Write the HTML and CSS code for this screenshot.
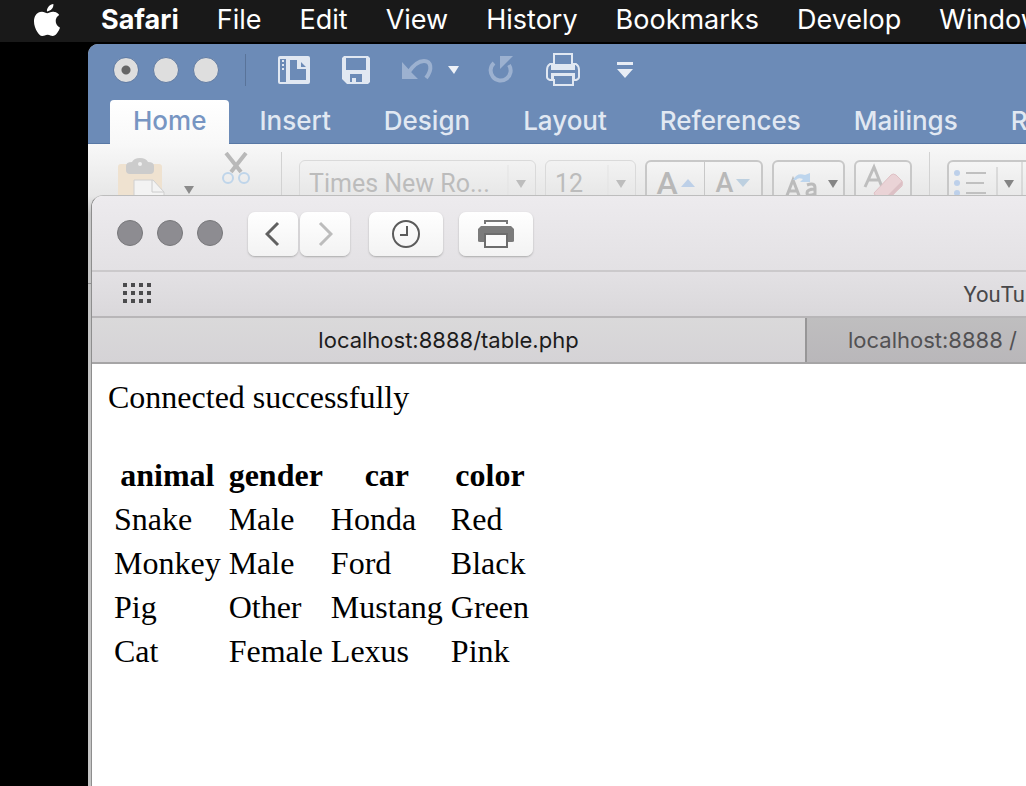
FILE: index.html
```html
<!DOCTYPE html>
<html lang="en">
<head>
<meta charset="utf-8">
<title>localhost:8888/table.php</title>
<link rel="stylesheet" href="styles.css">
</head>
<body class="desktop">
<nav class="menubar" aria-label="Menu bar">
  <button class="menu" aria-label="Apple"><svg width="32" height="32" viewBox="0 0 24 24" fill="#fff"><path d="M12.152 6.896c-.948 0-2.415-1.078-3.96-1.04-2.04.027-3.91 1.183-4.961 3.014-2.117 3.675-.546 9.103 1.519 12.09 1.013 1.454 2.208 3.09 3.792 3.039 1.52-.065 2.09-.987 3.935-.987 1.831 0 2.35.987 3.96.948 1.637-.026 2.676-1.48 3.676-2.948 1.156-1.688 1.636-3.325 1.662-3.415-.039-.013-3.182-1.221-3.22-4.857-.026-3.04 2.48-4.494 2.597-4.559-1.429-2.09-3.623-2.324-4.39-2.376-2-.156-3.675 1.09-4.61 1.09zM15.53 3.83c.843-1.012 1.4-2.427 1.245-3.83-1.207.052-2.662.805-3.532 1.818-.78.896-1.454 2.338-1.273 3.714 1.338.104 2.715-.688 3.559-1.701"/></svg></button>
  <button class="menu menu-app">Safari</button>
  <button class="menu">File</button>
  <button class="menu">Edit</button>
  <button class="menu">View</button>
  <button class="menu">History</button>
  <button class="menu">Bookmarks</button>
  <button class="menu">Develop</button>
  <button class="menu">Window</button>
</nav>

<section class="word" aria-label="Word window">
  <header class="word-title">
    <div class="lights">
      <button class="light light-edited" aria-label="Close"></button>
      <button class="light" aria-label="Minimize"></button>
      <button class="light" aria-label="Zoom"></button>
    </div>
    <div class="quick">
      <button class="tool" aria-label="Layout view"><svg width="32" height="28" viewBox="0 0 32 28"><rect width="32" height="28" rx="2" fill="#e1e8f2"/><path d="M2 3h6v23H2zM12 4h9l7 7v13H12z" fill="#6c8bb7"/><path d="M19 4v9h9v-2h-5V4z" fill="#e1e8f2"/><path d="M4 4h2v2H4zM4 8h2v2H4zM4 12h2v2H4z" fill="#e1e8f2"/></svg></button>
      <button class="tool" aria-label="Save"><svg width="28" height="28" viewBox="0 0 28 28"><path d="M2 0h24l2 2v24l-2 2H5l-5-5V2z" fill="#e1e8f2"/><path d="M4 2h20v12H4zM8 18h12v8h-6v-4h-4v4H8z" fill="#6c8bb7"/></svg></button>
      <button class="tool tool-undo" aria-label="Undo"><svg width="58" height="22" viewBox="0 0 58 22"><path d="M0 3v17h16l-6-6z" fill="#9cb1d0"/><path d="M6 14C12 5 17 2 22 2c7 0 9 8 2 17" fill="none" stroke="#9cb1d0" stroke-width="4"/><path d="M46 7h11l-5 8z" fill="#eef2f8"/></svg></button>
      <button class="tool" aria-label="Redo"><svg width="26" height="28" viewBox="0 0 26 28"><path d="M6 7a10 10 0 1 0 15 2" fill="none" stroke="#9cb1d0" stroke-width="4"/><path d="M12 0h13L12 13z" fill="#9cb1d0"/></svg></button>
      <button class="tool" aria-label="Print"><svg width="34" height="34" viewBox="0 0 34 34"><path d="M8 1h18v10h4q3 2 3 6v7q0 2-3 3h-3v5H8v-5H4q-3-1-3-3v-7q0-4 3-6h4z" fill="#6c8bb7" stroke="#e1e8f2" stroke-width="2"/><path d="M5 11h24v6H5zM6 20h23v3H6zM5 20h3v8H5zM26 20h3v8h-3z" fill="#e1e8f2"/></svg></button>
      <button class="tool tool-more" aria-label="Customize toolbar"><svg width="18" height="16" viewBox="0 0 18 16"><path d="M1 0h16v3H1zM1 7h16l-8 9z" fill="#e8edf5"/></svg></button>
    </div>
  </header>
  <nav class="word-tabs" aria-label="Ribbon tabs">
    <button class="word-tab word-tab-active">Home</button>
    <button class="word-tab">Insert</button>
    <button class="word-tab">Design</button>
    <button class="word-tab">Layout</button>
    <button class="word-tab">References</button>
    <button class="word-tab">Mailings</button>
    <button class="word-tab">Review</button>
  </nav>
  <div class="ribbon">
    <div class="clipboard">
      <button class="tool paste" aria-label="Paste"><svg width="78" height="44" viewBox="0 0 78 44"><rect y="6" width="44" height="42" rx="3" fill="#efe2d0"/><path d="M8 8q0-4 6-4 2-4 8-4t8 4q6 0 6 4v4q0 4-4 4H12q-4 0-4-4z" fill="#ccc"/><circle cx="22" cy="6" r="2" fill="#f1f1f1"/><path d="M16 48V22h19l11 12v14z" fill="#f3f3f3" stroke="#d0d0d0"/><path d="M34 22v12h12" fill="none" stroke="#ccc"/><path d="M66 28h10l-5 8z" fill="#8b8b8b"/></svg></button>
      <button class="tool" aria-label="Cut"><svg width="30" height="34" viewBox="0 0 30 34"><path d="M5 1L20 20M25 1L10 20" stroke="#b9b9b9" stroke-width="4"/><g fill="none" stroke="#bfd5ea" stroke-width="2"><circle cx="7" cy="26" r="5"/><circle cx="23" cy="26" r="5"/></g></svg></button>
    </div>
    <div class="fonts">
      <div class="combo combo-font">
        <select class="combo-select" aria-label="Font"><option>Times New Ro...</option></select>
        <svg class="combo-caret" width="28" height="38" viewBox="0 0 28 38"><path d="M1 0v38" stroke="#e3e3e3"/><path d="M9 15h10l-5 8z" fill="#bdbdbd"/></svg>
      </div>
      <div class="combo combo-size">
        <select class="combo-select" aria-label="Font size"><option>12</option></select>
        <svg class="combo-caret" width="28" height="38" viewBox="0 0 28 38"><path d="M1 0v38" stroke="#e3e3e3"/><path d="M9 15h10l-5 8z" fill="#bdbdbd"/></svg>
      </div>
      <div class="group">
        <button class="cell cell-wide" aria-label="Increase font size"><span class="letter">A</span><svg width="14" height="8" viewBox="0 0 14 8"><path d="M0 8l7-8 7 8z" fill="#bdd0e8"/></svg></button>
        <button class="cell cell-wide" aria-label="Decrease font size"><span class="letter letter-small">A</span><svg width="14" height="8" viewBox="0 0 14 8"><path d="M0 0h14L7 8z" fill="#bdd0e0"/></svg></button>
      </div>
      <button class="group change-case" aria-label="Change case"><svg width="69" height="42" viewBox="0 0 69 42"><g fill="none" stroke="#bbb" stroke-width="3"><path d="M12 36l7-18 7 18M14 29h10"/><path d="M33 23q8-3 8 3v8M41 27q-8 0-8 4t8 1"/></g><path d="M19 18q4-8 12-5l5-2v9H26l3-3q-5-2-7 1z" fill="#bdd5ed"/><path d="M54 18h10l-5 8z" fill="#858585"/></svg></button>
      <button class="group" aria-label="Clear formatting"><svg width="54" height="42" viewBox="0 0 54 42"><path d="M9 25l9-20 8 20M12 18h11" fill="none" stroke="#bebebe" stroke-width="3"/><path d="M18 31l17-18q2-2 5 0l6 6q1 2 0 5L32 37H21z" fill="#ead3d6" stroke="#dfc1c5"/><path d="M22 37l8-2 16-16v4L33 38z" fill="#dcc0c5"/></svg></button>
    </div>
    <div class="lists">
      <button class="group" aria-label="Bulleted list"><svg width="84" height="42" viewBox="0 0 84 42"><g fill="#bdd0ea"><circle cx="8" cy="11" r="3"/><circle cx="8" cy="21" r="3"/><circle cx="8" cy="31" r="3"/></g><path d="M17 11h20M17 21h18M17 31h20" stroke="#c0c0c0" stroke-width="2"/><path d="M48 5v37M73 0v42" stroke="#c4c4c4"/><path d="M55 18h10l-5 8z" fill="#858585"/></svg></button>
    </div>
  </div>
  <div class="word-page"></div>
</section>

<section class="safari" aria-label="Safari window">
  <header class="toolbar">
    <div class="lights">
      <button class="light light-off" aria-label="Close"></button>
      <button class="light light-off" aria-label="Minimize"></button>
      <button class="light light-off" aria-label="Zoom"></button>
    </div>
    <div class="history">
      <button class="key key-narrow" aria-label="Back"><svg width="16" height="26" viewBox="0 0 16 26"><path d="M13 2L2 13l11 11" fill="none" stroke="#606060" stroke-width="3"/></svg></button>
      <button class="key key-narrow" aria-label="Forward"><svg width="16" height="26" viewBox="0 0 16 26"><path d="M3 2l11 11L3 24" fill="none" stroke="#bcbcbc" stroke-width="3"/></svg></button>
    </div>
    <button class="key" aria-label="History"><svg width="30" height="30" viewBox="0 0 30 30" fill="none" stroke="#5b5b5b" stroke-width="2"><circle cx="15" cy="15" r="13"/><path d="M16 7v9H9"/></svg></button>
    <button class="key" aria-label="Print"><svg width="36" height="30" viewBox="0 0 36 30"><path d="M7 5V2h22v3" fill="none" stroke="#777" stroke-width="2"/><path d="M3 7h30l3 3v12q0 1-2 1H2q-2 0-2-1V10z" fill="#7b7b7b"/><path d="M7 15h22v13H7z" fill="#fafafa" stroke="#6d6d6d" stroke-width="2"/></svg></button>
  </header>
  <div class="favorites">
    <button class="tool" aria-label="Top sites"><svg width="30" height="22" viewBox="0 0 30 22"><path d="M1 2h29M1 10h29M1 18h29" stroke="#4b4b4d" stroke-width="4" stroke-dasharray="4 4"/></svg></button>
    <a class="favorite" href="#">YouTu</a>
  </div>
  <nav class="tabs" aria-label="Browser tabs">
    <button class="tab tab-active">localhost:8888/table.php</button>
    <button class="tab tab-other">localhost:8888 /</button>
  </nav>
  <main class="page">
    <p class="status">Connected successfully</p>
    <table class="records">
      <thead><tr><th>animal</th><th>gender</th><th>car</th><th>color</th></tr></thead>
      <tbody>
        <tr><td>Snake</td><td>Male</td><td>Honda</td><td>Red</td></tr>
        <tr><td>Monkey</td><td>Male</td><td>Ford</td><td>Black</td></tr>
        <tr><td>Pig</td><td>Other</td><td>Mustang</td><td>Green</td></tr>
        <tr><td>Cat</td><td>Female</td><td>Lexus</td><td>Pink</td></tr>
      </tbody>
    </table>
  </main>
</section>
</body>
</html>
```
FILE: styles.css
```css
* { box-sizing: border-box; }

.desktop {
  position: relative;
  margin: 0;
  min-height: 100vh;
  overflow: hidden;
  background: #000;
  font-family: Roboto, "Liberation Sans", sans-serif;
}

button, select {
  margin: 0;
  padding: 0;
  border: 0;
  background: none;
  color: inherit;
  font: inherit;
  flex-shrink: 0;
}

svg { display: block; flex-shrink: 0; }

/* Menu bar */
.menubar {
  display: flex;
  align-items: center;
  gap: 38px;
  height: 42px;
  padding: 0 0 2px 31px;
  background: #191919;
  color: #fff;
  font: 27px/36px Inter, sans-serif;
  white-space: nowrap;
}
.menu-app { font-weight: 700; }

/* Windows lying on the desktop */
.word, .safari {
  position: absolute;
  right: 0;
  bottom: 0;
  overflow: hidden;
  display: flex;
  flex-direction: column;
}
.word {
  top: 44px;
  left: 88px;
  border-top-left-radius: 10px;
  background: #c4c4c4;
}
.safari {
  top: 195px;
  left: 91px;
  border-top: 1px solid #bdbdbd;
  border-left: 1px solid #8e8e8e;
  border-top-left-radius: 12px;
  background: #fff;
}

.lights { display: flex; gap: 14px; }
.light {
  width: 26px;
  height: 26px;
  border: 1px solid #607ba3;
  border-radius: 50%;
  background: #dedede;
}
.light-edited { background: radial-gradient(circle, #666 4px, #dedede 5px); }

/* Word title bar */
.word-title {
  display: flex;
  align-items: center;
  height: 56px;
  padding: 0 0 4px 25px;
  background: #6c8bb7;
}
.quick {
  display: flex;
  align-items: center;
  gap: 32px;
  height: 32px;
  margin-left: 26px;
  padding-left: 32px;
  border-left: 1px solid #597399;
}
.tool-undo { margin-right: -4px; }
.tool-more { padding-left: 4px; }

.word-tabs {
  display: flex;
  gap: 7px;
  height: 44px;
  padding-left: 22px;
  background: #6c8bb7;
  box-shadow: inset 0 -1px #5878a5;
  color: #e1e8f2;
  font: 500 26px/40px Inter, sans-serif;
  white-space: nowrap;
}
.word-tab { padding: 0 23px 2px; }
.word-tab-active {
  border-radius: 4px 4px 0 0;
  background: linear-gradient(#fff, #f8f8f8);
  color: #7795c2;
}

/* Ribbon */
.ribbon {
  display: flex;
  align-items: flex-start;
  height: 140px;
  flex-shrink: 0;
  border-bottom: 1px solid #8f8f8f;
  background: linear-gradient(#f8f8f8, #e7e7e7 52px, #c6c6c6 70px);
}
.clipboard {
  display: flex;
  align-items: flex-start;
  gap: 25px;
  height: 56px;
  margin-top: 8px;
  padding: 0 30px 0 30px;
  border-right: 1px solid #d2d2d2;
}
.paste { padding-top: 6px; }
.fonts {
  display: flex;
  gap: 9px;
  height: 56px;
  margin-top: 8px;
  padding: 8px 17px 0;
  border-right: 1px solid #d2d2d2;
}
.combo, .group {
  display: flex;
  height: 46px;
  flex-shrink: 0;
  border: 1px solid #dadada;
  border-radius: 6px;
}
.combo { color: #bcbcbc; font-size: 25px; }
.combo-font { width: 237px; }
.combo-size { width: 91px; }
.combo-select {
  flex: 1;
  min-width: 0;
  padding-left: 9px;
  appearance: none;
  opacity: 1;
}
.combo-caret { margin-top: 4px; }
.group {
  border: 2px solid #c8c8c8;
  background: linear-gradient(#f5f5f5, #e6e6e6);
}
.cell {
  display: flex;
  align-items: center;
  justify-content: center;
  gap: 3px;
}
.cell-wide { width: 57px; }
.cell + .cell { border-left: 1px solid #c8c8c8; }
.letter { color: #b8b8b8; font-size: 32px; font-weight: 500; }
.letter-small { font-size: 27px; }
.change-case { width: 73px; }
.lists { padding: 16px 0 0 17px; }
.word-page { flex: 1; background: #c4c4c4; }

/* Safari toolbar */
.toolbar {
  display: flex;
  align-items: center;
  gap: 16px;
  height: 76px;
  flex-shrink: 0;
  padding-left: 25px;
  border-bottom: 2px solid #cbc9cb;
  background: linear-gradient(#edebee, #e3e1e4);
}
.light-off {
  border-color: #77777a;
  background: #8d8c91;
}
.history { display: flex; gap: 2px; margin: 0 3px 0 9px; }
.key {
  display: flex;
  align-items: center;
  justify-content: center;
  width: 74px;
  height: 44px;
  margin-top: 2px;
  border-radius: 7px;
  background: linear-gradient(#fff, #f3f3f3);
  box-shadow: 0 1px 2px #aaa;
}
.key-narrow { width: 50px; }

.favorites {
  display: flex;
  align-items: center;
  justify-content: space-between;
  height: 46px;
  flex-shrink: 0;
  padding: 0 1px 0 30px;
  border-bottom: 2px solid #b8b6b8;
  background: linear-gradient(#e3e1e4, #dad8db);
}
.favorite { color: #48484a; font-size: 22px; text-decoration: none; }

.tabs {
  display: grid;
  grid-template-columns: 713fr 221fr;
  height: 46px;
  flex-shrink: 0;
  border-bottom: 2px solid #a6a5a6;
  font: 22px/44px Inter, sans-serif;
  white-space: nowrap;
}
.tab { min-width: 0; overflow: hidden; }
.tab-active {
  background: linear-gradient(#dad9da, #d5d3d6);
  color: #1c1c1c;
}
.tab-other {
  padding-left: 41px;
  border-left: 2px solid #979697;
  background: linear-gradient(#bfbebf, #b9b7ba);
  color: #525153;
  text-align: left;
}

/* Web page */
.page {
  flex: 1;
  padding: 15px 16px;
  color: #000;
  font: 32px/36px "Liberation Serif", serif;
}
.status { margin: 0 0 36px; }
.records { border-spacing: 4px; }
.records th, .records td { padding: 2px; }
```
